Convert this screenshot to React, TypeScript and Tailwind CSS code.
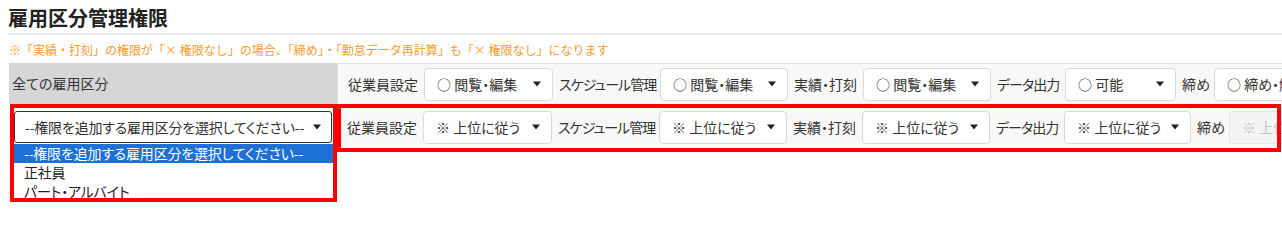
import React from 'react'

type Perm = { label: string; labelWidth: number; tight?: boolean; value: string; width: number; disabled?: boolean }

const ROW_ALL: Perm[] = [
  { label: '従業員設定', labelWidth: 70, value: '○ 閲覧・編集', width: 129 },
  { label: 'スケジュール管理', labelWidth: 95, tight: true, value: '○ 閲覧・編集', width: 128 },
  { label: '実績・打刻', labelWidth: 63, value: '○ 閲覧・編集', width: 128 },
  { label: 'データ出力', labelWidth: 62, tight: true, value: '○ 可能', width: 111 },
  { label: '締め', labelWidth: 26, value: '○ 締め・解除', width: 128 },
]

const ROW_NEW: Perm[] = [
  { label: '従業員設定', labelWidth: 70, value: '※ 上位に従う', width: 129 },
  { label: 'スケジュール管理', labelWidth: 95, tight: true, value: '※ 上位に従う', width: 128 },
  { label: '実績・打刻', labelWidth: 63, value: '※ 上位に従う', width: 128 },
  { label: 'データ出力', labelWidth: 62, tight: true, value: '※ 上位に従う', width: 127 },
  { label: '締め', labelWidth: 26, value: '※ 上位に従う', width: 128, disabled: true },
]

const EMPLOYMENT_TYPES = ['--権限を追加する雇用区分を選択してください--', '正社員', 'パート・アルバイト']

function Caret() {
  return (
    <svg width="8" height="6" viewBox="0 0 8 6" className="shrink-0">
      <path d="M0 0.5h8L4 5.5z" fill="#222" />
    </svg>
  )
}

// ─── Fake native select ──────────────────────────────────────────────────────
function SelectBox({ value, width, disabled }: { value: string; width: number; disabled?: boolean }) {
  return (
    <div
      style={{ width }}
      className={[
        'h-[33px] shrink-0 flex items-center justify-between pl-[12px] pr-[11px] rounded-[4px] border text-[14px] whitespace-nowrap overflow-hidden',
        disabled ? 'bg-[#f4f4f4] border-[#e4e4e4] text-[#c4c4c4]' : 'bg-white border-[#d9d9d9] text-[#333]',
      ].join(' ')}
    >
      <span>{value}</span>
      {!disabled && <Caret />}
    </div>
  )
}

function PermRow({ items }: { items: Perm[] }) {
  return (
    <div className="flex items-center gap-[6px] pl-[10px] w-max">
      {items.map((p) => (
        <React.Fragment key={p.label}>
          <span
            style={{ width: p.labelWidth }}
            className={[
              'shrink-0 text-[14px] text-[#333] whitespace-nowrap',
              p.tight ? 'tracking-[-1px]' : '',
            ].join(' ')}
          >
            {p.label}
          </span>
          <SelectBox value={p.value} width={p.width} disabled={p.disabled} />
        </React.Fragment>
      ))}
    </div>
  )
}

export default function App() {
  return (
    <div className="relative w-[1282px] h-[204px] overflow-hidden bg-white font-['Noto_Sans_CJK_JP',sans-serif] [font-feature-settings:'palt'] text-[#333]">
      <div className="pl-[8px] pt-[6px]">
        <h2 className="text-[20px] font-bold leading-[24px] text-[#222] pb-[3px] border-b-2 border-[#e6e6e6]">
          雇用区分管理権限
        </h2>
      </div>

      <p className="pl-[9px] mt-[6px] text-[12px] leading-[18px] text-[#f99b2a] whitespace-nowrap [font-feature-settings:normal]">
        ※「実績・打刻」の権限が「× 権限なし」の場合、「締め」・「勤怠データ再計算」も「× 権限なし」になります
      </p>

      {/* ─── Permission table ─────────────────────────────────────── */}
      <div className="pl-[9px] mt-[4px] w-max">
        <div className="flex h-[41px]">
          <div className="w-[328px] shrink-0 bg-[#d6d6d6] pl-[3px] flex items-center text-[14px]">全ての雇用区分</div>
          <div className="flex items-center bg-[#f8f8f8] border-t border-l border-[#dedede] w-[1000px]">
            <PermRow items={ROW_ALL} />
          </div>
        </div>

        <div className="flex h-[46px]">
          <div className="relative w-[328px] shrink-0 bg-white pl-[5px] pr-[5px] flex items-center">
            <div className="w-full h-[32px] flex items-center justify-between pl-[10px] pr-[10px] rounded-[3px] border border-[#333] bg-white text-[14px] whitespace-nowrap">
              <span className="tracking-[-0.2px]">{EMPLOYMENT_TYPES[0]}</span>
              <Caret />
            </div>

            {/* open dropdown list */}
            <ul className="absolute left-[5px] top-[40px] w-[319px] bg-white text-[14px] z-10">
              {EMPLOYMENT_TYPES.map((t, i) => (
                <li
                  key={t}
                  className={[
                    'h-[19px] leading-[19px] pl-[10px] whitespace-nowrap tracking-[-0.2px]',
                    i === 0 ? 'bg-[#1e6fd6] text-white' : 'text-[#222]',
                  ].join(' ')}
                >
                  {t}
                </li>
              ))}
            </ul>
          </div>
          <div className="flex items-center bg-[#f8f8f8] w-[1000px]">
            <PermRow items={ROW_NEW} />
          </div>
        </div>
      </div>

      {/* ─── Red annotation boxes ─────────────────────────────────── */}
      <div className="absolute left-[10px] top-[104px] w-[327px] h-[98px] border-4 border-[#ff0000] z-20 pointer-events-none" />
      <div className="absolute left-[337px] top-[104px] w-[944px] h-[48px] border-4 border-[#ff0000] z-20 pointer-events-none" />
    </div>
  )
}
